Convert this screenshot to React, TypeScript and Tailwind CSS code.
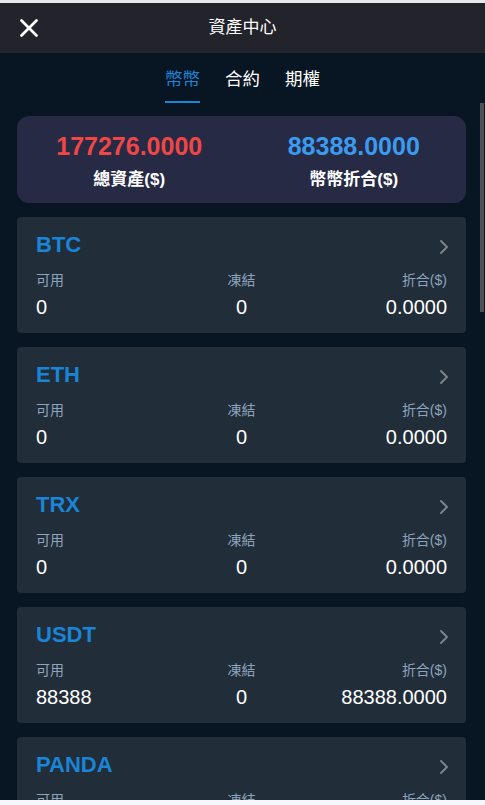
import { X, ChevronRight } from "lucide-react";

const assets = [
  { sym: "BTC", avail: "0", frozen: "0", value: "0.0000" },
  { sym: "ETH", avail: "0", frozen: "0", value: "0.0000" },
  { sym: "TRX", avail: "0", frozen: "0", value: "0.0000" },
  { sym: "USDT", avail: "88388", frozen: "0", value: "88388.0000" },
  { sym: "PANDA", avail: "0", frozen: "0", value: "0.0000" },
];

export default function App() {
  return (
    <div
      className="h-[805px] w-[485px] flex flex-col bg-[#081522] overflow-hidden"
      style={{ fontFamily: '"Liberation Sans", "Noto Sans CJK TC", sans-serif' }}
    >
      <div className="h-[3px] bg-[#e7e8eb]" />
      {/* header */}
      <div className="h-[50px] bg-[#22232b] flex items-center relative">
        <button className="absolute left-[14px] top-[10px] text-white">
          <X size={30} strokeWidth={2.2} />
        </button>
        <div className="flex-1 text-center text-white text-[17px]">資產中心</div>
      </div>

      {/* tabs */}
      <div className="h-[50px] flex justify-center gap-[25px] text-[17.5px]">
        <div className="relative flex items-center text-[#1a84d6] pt-[2px]">
          幣幣
          <div className="absolute left-0 right-0 bottom-0 h-[2px] bg-[#1a84d6]" />
        </div>
        <div className="flex items-center text-white pt-[2px]">合約</div>
        <div className="flex items-center text-white pt-[2px]">期權</div>
      </div>

      {/* content */}
      <div className="flex-1 relative overflow-hidden">
        <div className="px-[17px] pt-[13px] pr-[19px] flex flex-col gap-[14px]">
          <div className="rounded-xl bg-[#272a45] grid grid-cols-2 pt-[15px] pb-[11px]">
            <div className="flex flex-col items-center">
              <div className="text-[25px] leading-[30px] font-bold text-[#f04646]">177276.0000</div>
              <div className="mt-[7px] text-[17px] leading-[24px] font-bold text-white">總資產($)</div>
            </div>
            <div className="flex flex-col items-center">
              <div className="text-[25px] leading-[30px] font-bold text-[#3a9bef]">88388.0000</div>
              <div className="mt-[7px] text-[17px] leading-[24px] font-bold text-white">幣幣折合($)</div>
            </div>
          </div>

          {assets.map((a) => (
            <div key={a.sym} className="rounded bg-[#212d39] px-[19px] pt-[14px] pb-[14px]">
              <div className="flex items-center justify-between h-[28px]">
                <div className="text-[22px] leading-[28px] font-bold text-[#1a84d6]">{a.sym}</div>
                <ChevronRight size={24} strokeWidth={1.9} className="text-[#7d848c] -mr-[9px] mt-[3px]" />
              </div>
              <div className="mt-[11px] grid grid-cols-3 text-[14px] leading-[20px] text-[#8ea4bd]">
                <div>可用</div>
                <div className="text-center">凍結</div>
                <div className="text-right">折合($)</div>
              </div>
              <div className="mt-[5px] grid grid-cols-3 text-[20px] leading-[24px] text-white">
                <div>{a.avail}</div>
                <div className="text-center">{a.frozen}</div>
                <div className="text-right">{a.value}</div>
              </div>
            </div>
          ))}
        </div>
        {/* scrollbar thumb */}
        <div className="absolute right-[1px] top-0 w-[4px] h-[209px] bg-[#4c5258]" />
      </div>
      <div className="h-[5px] bg-[#f5f7fc]" />
    </div>
  );
}
